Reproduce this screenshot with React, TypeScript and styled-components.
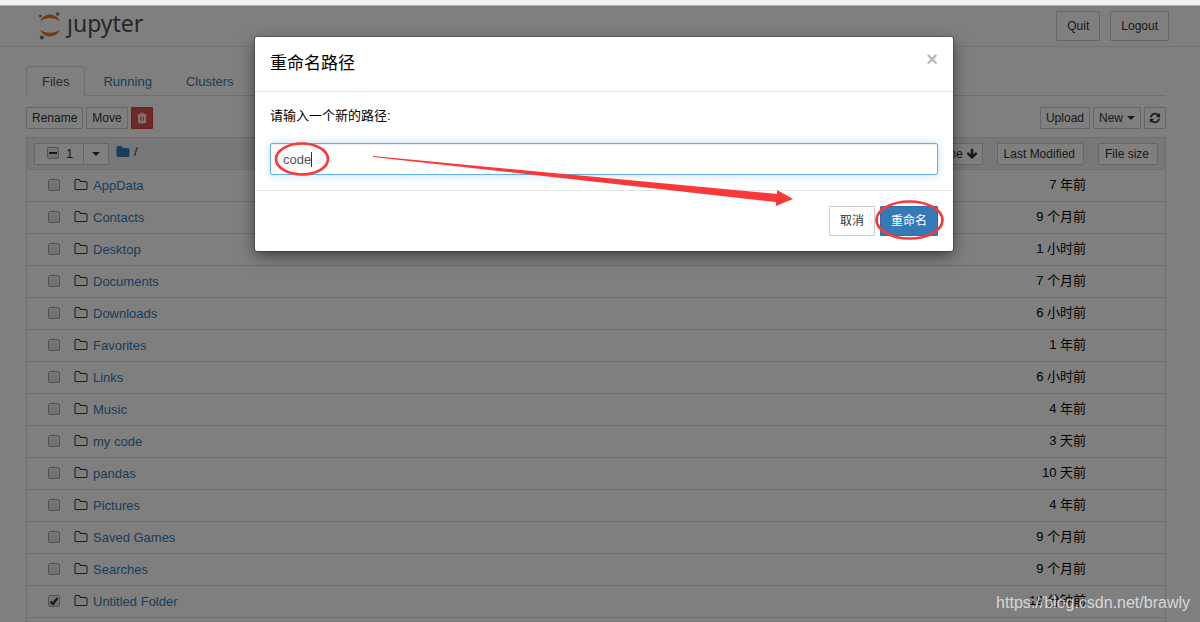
import React, { useState } from "react";
import styled, { createGlobalStyle, css } from "styled-components";

const Global = createGlobalStyle`
  *, *::before, *::after { box-sizing: border-box; }
  body {
    margin: 0;
    font-family: "Liberation Sans", "Noto Sans CJK SC", sans-serif;
    font-size: 13px;
    line-height: 20px;
    color: #000;
    background: #fff;
  }
  button, input { font-family: inherit; }
  a { color: #337ab7; text-decoration: none; }
`;

const Page = styled.div`
  display: flex;
  flex-direction: column;
  height: 100vh;
  overflow: hidden;
`;

const BrowserEdge = styled.div`
  flex: none;
  height: 6px;
  background: #f2f2f2;
  border-bottom: 1px solid #b0b2b0;
`;

const Stage = styled.div`
  position: relative;
  flex: 1;
  min-height: 0;
  display: flex;
  flex-direction: column;
  overflow: hidden;
`;

const Header = styled.header`
  flex: none;
  display: flex;
  justify-content: space-between;
  align-items: center;
  height: 41px;
  padding: 0 31px 0 38px;
  border-bottom: 1px solid #e7e7e7;
`;

const Logo = styled.a`
  display: flex;
  align-items: center;
  gap: 7px;
  color: #4e4e4e;
`;

const LogoMark = styled.svg`
  display: block;
  width: 22px;
  height: 28px;
`;

const Wordmark = styled.span`
  padding-bottom: 7px;
  font-family: "Noto Sans", "Open Sans", sans-serif;
  font-size: 23px;
  line-height: 32px;
`;

const HeaderActions = styled.div`
  display: flex;
  gap: 10px;
`;

const Button = styled.button<{ $size?: "xs" | "sm"; $tone?: "danger" | "primary"; $square?: boolean }>`
  display: inline-flex;
  align-items: center;
  justify-content: center;
  gap: 4px;
  height: 22px;
  padding: 0 5px;
  border: 1px solid #ccc;
  border-radius: 1px;
  background: #fff;
  color: #333;
  font-size: 12px;
  line-height: 18px;
  white-space: nowrap;
  ${(p) => p.$size === "sm" && css`height: 30px; padding: 0 10px;`}
  ${(p) => p.$square && css`width: 22px; padding: 0;`}
  ${(p) => p.$tone === "danger" && css`background: #d9534f; border-color: #d43f3a; color: #fff;`}
  ${(p) => p.$tone === "primary" && css`background: #337ab7; border-color: #2e6da4; color: #fff;`}
`;

const SortButton = styled(Button)<{ $active?: boolean }>`
  gap: 3px;
  padding: ${(p) => (p.$active ? "0 4px" : "0 8px 0 6px")};
`;

const Glyph = styled.svg<{ $size: number }>`
  display: block;
  flex: none;
  width: ${(p) => p.$size}px;
  height: ${(p) => p.$size}px;
  fill: currentColor;
`;

const CaretDown = styled.span`
  border-top: 4px solid;
  border-left: 4px solid transparent;
  border-right: 4px solid transparent;
`;

const Main = styled.main`
  flex: 1;
  display: flex;
  flex-direction: column;
  padding: 19px 34px 0 26px;
`;

const Tabs = styled.nav`
  display: flex;
  gap: 2px;
  height: 30px;
  border-bottom: 1px solid #ddd;
`;

const Tab = styled.a<{ $active?: boolean }>`
  height: 30px;
  padding: 5px 15px 4px;
  border: 1px solid transparent;
  border-radius: 2px 2px 0 0;
  ${(p) => p.$active && css`
    border-color: #ddd #ddd #fff;
    background: #fff;
    color: #555;
  `}
`;

const Toolbar = styled.div`
  display: flex;
  justify-content: space-between;
  padding: 11px 0 8px;
`;

const ButtonRow = styled.div`
  display: flex;
  gap: 3px;
`;

const List = styled.section`
  flex: 1;
  border: 1px solid #ddd;
  border-bottom: 0;
  border-radius: 2px 2px 0 0;
`;

const ListHeader = styled.div`
  display: flex;
  align-items: center;
  height: 32px;
  padding: 0 7px;
  background: #eee;
  border-bottom: 1px solid #ddd;
`;

const SelectGroup = styled.div`
  display: flex;
  height: 22px;
  border: 1px solid #ccc;
  background: #fff;
`;

const SelectAll = styled.label`
  display: flex;
  align-items: center;
  gap: 7px;
  width: 48px;
  padding-left: 12px;
  color: #333;
`;

const SelectMenu = styled.button`
  display: flex;
  align-items: center;
  justify-content: center;
  width: 25px;
  padding: 1px 0 0;
  border: 0;
  border-left: 1px solid #ccc;
  background: #fff;
  color: #333;
`;

const Crumb = styled.div`
  display: flex;
  align-items: center;
  gap: 4px;
  margin-left: 7px;
  padding-bottom: 3px;
  color: #333;
`;

const SortButtons = styled.div`
  display: flex;
  gap: 14px;
  margin-left: auto;
`;

const Check = styled.input`
  appearance: none;
  flex: none;
  width: 12px;
  height: 12px;
  margin: 0 0 2px;
  border: 1px solid #a4a4a4;
  border-radius: 2px;
  background: linear-gradient(#f0f0f0, #dcdcdc);
  &:checked {
    background: url("data:image/svg+xml,%3Csvg xmlns='http://www.w3.org/2000/svg' viewBox='0 0 10 10'%3E%3Cpath d='M1.5 5.5 4 8 8.5 2' fill='none' stroke='%23333' stroke-width='2.4'/%3E%3C/svg%3E"), linear-gradient(#f0f0f0, #dcdcdc);
  }
  &:indeterminate {
    background: linear-gradient(#333, #333) center / 8px 2px no-repeat, linear-gradient(#f0f0f0, #dcdcdc);
  }
`;

const Rows = styled.ul`
  list-style: none;
  margin: 0;
  padding: 0;
`;

const Row = styled.li`
  display: flex;
  align-items: center;
  height: 32px;
  padding: 0 79px 0 21px;
  border-bottom: 1px solid #ddd;
`;

const Entry = styled.a`
  display: flex;
  align-items: center;
  gap: 5px;
  margin-left: 14px;
  ${Glyph} {
    margin-bottom: 1px;
    color: #333;
  }
`;

const Modified = styled.time`
  margin-left: auto;
  padding-bottom: 2px;
`;

const Backdrop = styled.div`
  position: absolute;
  inset: 0;
  padding: 31px 0 0 8px;
  background: rgba(0, 0, 0, 0.5);
`;

const Dialog = styled.form`
  position: relative;
  width: 698px;
  max-width: 100%;
  margin: 0 auto;
  border-radius: 2px;
  background: #fff;
  box-shadow: 0 0 0 1px rgba(0, 0, 0, 0.2), 0 5px 15px rgba(0, 0, 0, 0.5);
`;

const DialogHeader = styled.div`
  display: flex;
  justify-content: space-between;
  align-items: flex-start;
  height: 55px;
  padding: 15px;
  border-bottom: 1px solid #e5e5e5;
`;

const DialogTitle = styled.h4`
  margin: 0;
  font-size: 17px;
  font-weight: 400;
  line-height: 24px;
`;

const Close = styled.button`
  padding: 0;
  border: 0;
  background: none;
  color: #bbb;
  font-size: 20px;
  font-weight: 700;
  line-height: 14px;
`;

const DialogBody = styled.div`
  display: flex;
  flex-direction: column;
  gap: 17px;
  padding: 14px 15px 15px;
`;

const Field = styled.div`
  position: relative;
`;

const TextInput = styled.input`
  display: block;
  width: 100%;
  height: 32px;
  padding: 0 12px;
  border: 1px solid #66afe9;
  border-radius: 2px;
  outline: 0;
  background: #fff;
  box-shadow: inset 0 1px 1px rgba(0, 0, 0, 0.075), 0 0 8px rgba(102, 175, 233, 0.4);
  color: #555;
  font-size: 13px;
  caret-color: transparent;
`;

const TextCursor = styled.span`
  position: absolute;
  top: 9px;
  left: 41px;
  width: 1px;
  height: 15px;
  background: #333;
`;

const DialogFooter = styled.div`
  display: flex;
  justify-content: flex-end;
  gap: 5px;
  padding: 15px;
  border-top: 1px solid #e5e5e5;
`;

const Annotations = styled.svg`
  position: absolute;
  inset: 0;
  width: 100%;
  height: 100%;
  overflow: visible;
  pointer-events: none;
`;

const Watermark = styled.span`
  position: absolute;
  right: 10px;
  bottom: 8px;
  color: rgba(255, 255, 255, 0.7);
  font-size: 16px;
  line-height: 22px;
`;

const glyphs = {
  trash:
    "M704 1376v-704q0-14-9-23t-23-9h-64q-14 0-23 9t-9 23v704q0 14 9 23t23 9h64q14 0 23-9t9-23zm256 0v-704q0-14-9-23t-23-9h-64q-14 0-23 9t-9 23v704q0 14 9 23t23 9h64q14 0 23-9t9-23zm256 0v-704q0-14-9-23t-23-9h-64q-14 0-23 9t-9 23v704q0 14 9 23t23 9h64q14 0 23-9t9-23zm-544-992h448l-48-117q-7-9-17-11h-317q-10 2-17 11zm928 32v64q0 14-9 23t-23 9h-96v948q0 83-47 143.500t-113 60.500h-832q-66 0-113-58.500t-47-141.500v-952h-96q-14 0-23-9t-9-23v-64q0-14 9-23t23-9h309l70-167q15-37 54-63t79-26h320q40 0 79 26t54 63l70 167h309q14 0 23 9t9 23z",
  refresh:
    "M1639 1056q0 5-1 7-64 268-268 434.500t-478 166.500q-146 0-282.500-55t-243.500-157l-129 129q-19 19-45 19t-45-19-19-45v-448q0-26 19-45t45-19h448q26 0 45 19t19 45-19 45l-137 137q71 66 161 102t187 36q134 0 250-65t186-179q11-17 53-117 8-23 30-23h192q13 0 22.500 9.500t9.500 22.500zm25-800v448q0 26-19 45t-45 19h-448q-26 0-45-19t-19-45 19-45l138-138q-148-137-349-137-134 0-250 65t-186 179q-11 17-53 117-8 23-30 23h-199q-13 0-22.500-9.500t-9.500-22.500v-7q65-268 270-434.500t480-166.500q146 0 284 55.500t245 156.500l130-129q19-19 45-19t45 19 19 45z",
  arrowDown:
    "M1675 832q0 53-37 90l-651 652q-39 37-91 37-53 0-90-37l-651-652q-38-36-38-90 0-53 38-91l74-75q39-37 91-37 53 0 90 37l294 294v-704q0-52 38-90t90-38h128q52 0 90 38t38 90v704l294-294q37-37 90-37 52 0 91 37l75 75q37 39 37 91z",
  folder:
    "M1728 608v704q0 92-66 158t-158 66h-1216q-92 0-158-66t-66-158v-960q0-92 66-158t158-66h320q92 0 158 66t66 158v32h672q92 0 158 66t66 158z",
  folderOutline:
    "M1600 1312v-704q0-40-28-68t-68-28h-704q-40 0-68-28t-28-68v-64q0-40-28-68t-68-28h-320q-40 0-68 28t-28 68v960q0 40 28 68t68 28h1216q40 0 68-28t28-68zm128-704v704q0 92-66 158t-158 66h-1216q-92 0-158-66t-66-158v-960q0-92 66-158t158-66h320q92 0 158 66t66 158v32h672q92 0 158 66t66 158z",
};

function Icon({ name, size = 12 }: { name: keyof typeof glyphs; size?: number }) {
  return (
    <Glyph $size={size} viewBox="0 0 1792 1792" aria-hidden="true">
      <path d={glyphs[name]} />
    </Glyph>
  );
}

const folders: [string, string][] = [
  ["AppData", "7 年前"],
  ["Contacts", "9 个月前"],
  ["Desktop", "1 小时前"],
  ["Documents", "7 个月前"],
  ["Downloads", "6 小时前"],
  ["Favorites", "1 年前"],
  ["Links", "6 小时前"],
  ["Music", "4 年前"],
  ["my code", "3 天前"],
  ["pandas", "10 天前"],
  ["Pictures", "4 年前"],
  ["Saved Games", "9 个月前"],
  ["Searches", "9 个月前"],
  ["Untitled Folder", "19 分钟前"],
];

function JupyterLogo() {
  return (
    <Logo href="#" aria-label="jupyter">
      <LogoMark viewBox="0 0 22 28" aria-hidden="true">
        <path d="M2 9.500C4 4.500 8 2.500 12 2.500S20 4.500 22 9.500C19 7.200 16 6.200 12 6.200S5 7.200 2 9.500Z" fill="#f37726" />
        <path d="M2 17.500C4 22.500 8 24.500 12 24.500S20 22.500 22 17.500C19 19.800 16 20.800 12 20.800S5 19.800 2 17.500Z" fill="#f37726" />
        <circle cx="19.700" cy="2" r="1.700" fill="#767677" />
        <circle cx="2.300" cy="4" r="1.200" fill="#616262" />
        <circle cx="3.800" cy="25.500" r="2.100" fill="#767677" />
      </LogoMark>
      <Wordmark>ȷupyter</Wordmark>
    </Logo>
  );
}

export default function App() {
  const [path, setPath] = useState("code");
  return (
    <Page>
      <Global />
      <BrowserEdge />
      <Stage>
        <Header>
          <JupyterLogo />
          <HeaderActions>
            <Button $size="sm">Quit</Button>
            <Button $size="sm">Logout</Button>
          </HeaderActions>
        </Header>
        <Main>
          <Tabs>
            <Tab href="#files" $active>Files</Tab>
            <Tab href="#running">Running</Tab>
            <Tab href="#clusters">Clusters</Tab>
          </Tabs>
          <Toolbar>
            <ButtonRow>
              <Button>Rename</Button>
              <Button>Move</Button>
              <Button $square $tone="danger" aria-label="Delete"><Icon name="trash" /></Button>
            </ButtonRow>
            <ButtonRow>
              <Button>Upload</Button>
              <Button>New <CaretDown /></Button>
              <Button $square aria-label="Refresh"><Icon name="refresh" /></Button>
            </ButtonRow>
          </Toolbar>
          <List>
            <ListHeader>
              <SelectGroup>
                <SelectAll>
                  <Check type="checkbox" ref={(el: HTMLInputElement | null) => { if (el) el.indeterminate = true; }} />
                  1
                </SelectAll>
                <SelectMenu type="button" aria-label="Select"><CaretDown /></SelectMenu>
              </SelectGroup>
              <Crumb>
                <a href="#root" aria-label="Home"><Icon name="folder" size={14} /></a>
                /
              </Crumb>
              <SortButtons>
                <SortButton $active>Name <Icon name="arrowDown" /></SortButton>
                <SortButton>Last Modified</SortButton>
                <SortButton>File size</SortButton>
              </SortButtons>
            </ListHeader>
            <Rows>
              {folders.map(([name, modified]) => (
                <Row key={name}>
                  <Check type="checkbox" aria-label={name} defaultChecked={name === "Untitled Folder"} />
                  <Entry href="#folder"><Icon name="folderOutline" size={14} />{name}</Entry>
                  <Modified>{modified}</Modified>
                </Row>
              ))}
            </Rows>
          </List>
        </Main>
        <Backdrop>
          <Dialog role="dialog" aria-labelledby="rename-title" onSubmit={(e) => e.preventDefault()}>
            <DialogHeader>
              <DialogTitle id="rename-title">重命名路径</DialogTitle>
              <Close type="button" aria-label="Close">×</Close>
            </DialogHeader>
            <DialogBody>
              <label htmlFor="new-path">请输入一个新的路径:</label>
              <Field>
                <TextInput id="new-path" value={path} onChange={(e) => setPath(e.target.value)} />
                <TextCursor />
              </Field>
            </DialogBody>
            <DialogFooter>
              <Button $size="sm" type="button">取消</Button>
              <Button $size="sm" $tone="primary">重命名</Button>
            </DialogFooter>
            <Annotations aria-hidden="true">
              <ellipse cx="47" cy="122" rx="26" ry="15.500" fill="none" stroke="#fb3838" strokeWidth="2.700" />
              <ellipse cx="654.500" cy="183" rx="33" ry="18.500" fill="none" stroke="#fb3838" strokeWidth="2.700" />
              <path d="M118 119 522 157V153L538 162 521 169V165L118 120Z" fill="#fb3838" />
            </Annotations>
          </Dialog>
        </Backdrop>
        <Watermark>https://blog.csdn.net/brawly</Watermark>
      </Stage>
    </Page>
  );
}
